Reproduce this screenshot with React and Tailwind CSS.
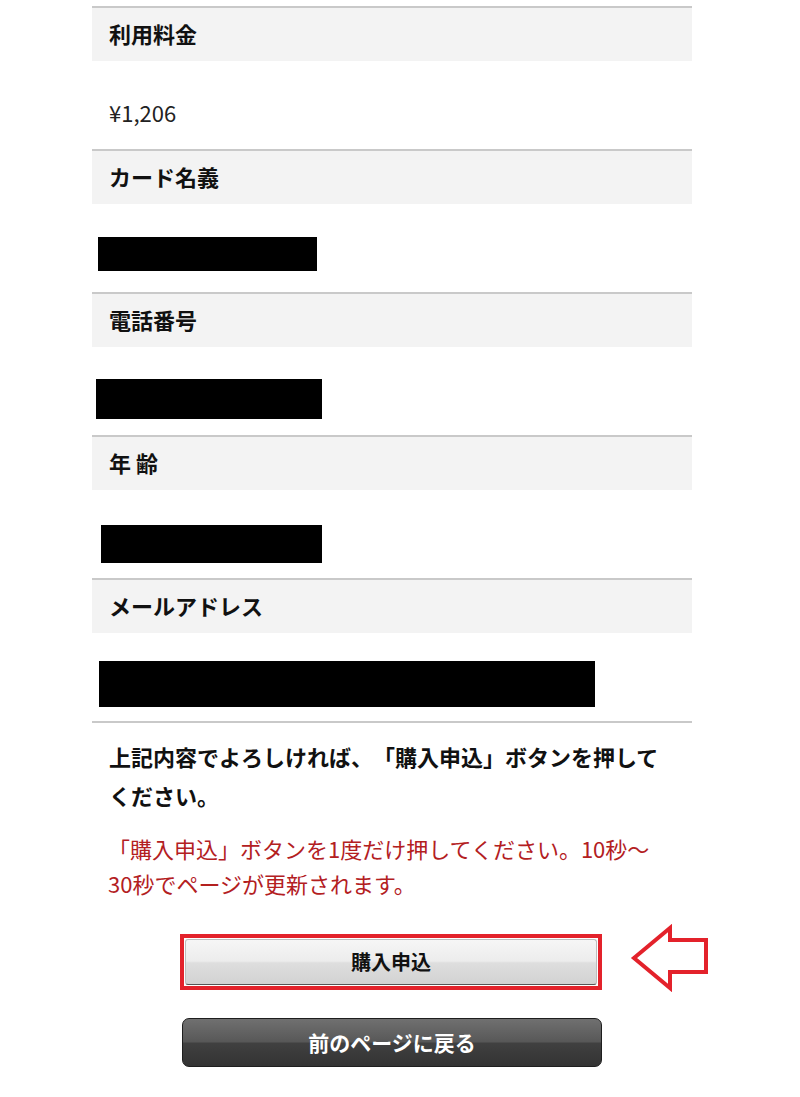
import React from "react";

const font = { fontFamily: '"Noto Sans CJK JP", "Noto Sans", sans-serif' };

// redacted values are just black bars in the screenshot
const rows = [
    { label: "利用料金", value: "¥1,206" },
    { label: "カード名義", pad: "pt-[33px] pl-[6px]", bar: "w-[219px] h-[34px]" },
    { label: "電話番号", pad: "pt-[32px] pl-[4px]", bar: "w-[226px] h-[40px]" },
    { label: "年 齢", pad: "pt-[35px] pl-[9px]", bar: "w-[221px] h-[38px]" },
    { label: "メールアドレス", pad: "pt-[28px] pl-[7px]", bar: "w-[496px] h-[46px]" },
];

function Row({ row }) {
    return (
        <div className="border-t-2 border-[#c9c9c9]">
            <div className="h-[53px] bg-[#f3f3f3] flex items-center pl-[17px] pb-[2px] text-[22px] font-bold text-[#111]">
                {row.label}
            </div>
            {row.value ? (
                <div className="h-[88px] pl-[17px] pt-[36px] text-[22px] leading-[30px] text-[#222]">{row.value}</div>
            ) : (
                <div className={`h-[88px] ${row.pad}`}>
                    <div className={`bg-black ${row.bar}`}></div>
                </div>
            )}
        </div>
    );
}

export default function App() {
    return (
        <div className="min-h-screen bg-white [text-spacing-trim:space-all]" style={font}>
            <div className="ml-[92px] w-[600px] pt-[6px]">
                {rows.map((row) => (
                    <Row key={row.label} row={row} />
                ))}

                <div className="border-t-2 border-[#c9c9c9] pt-[14px]">
                    <p className="px-[17px] text-[22px] font-bold leading-[39px] text-[#111]">
                        上記内容でよろしければ、「購入申込」ボタンを押してください。
                    </p>
                    <p className="mt-[16px] pl-[16px] pr-[24px] text-[22px] leading-[35px] text-[#b3201f]">
                        「購入申込」ボタンを1度だけ押してください。10秒〜30秒でページが更新されます。
                    </p>
                </div>

                {/* Buttons */}
                <div className="relative mt-[33px] flex flex-col items-center">
                    <div className="ml-[-2px] border-4 border-[#e3222b] p-px">
                        <button className="w-[412px] h-[46px] rounded-[3px] border border-[#bdbdbd] border-b-[#555] bg-[linear-gradient(to_bottom,#f6f6f6_0%,#ececec_48%,#dedede_52%,#d2d2d2_100%)] text-[20px] font-bold text-[#111]">
                            購入申込
                        </button>
                    </div>
                    <button className="mt-[28px] w-[420px] h-[49px] rounded-[7px] border border-[#1e1e1e] bg-[linear-gradient(to_bottom,#707070_0%,#585858_48%,#404040_52%,#333_100%)] text-[21px] font-bold text-white">
                        前のページに戻る
                    </button>

                    {/* annotation arrow */}
                    <svg className="absolute left-[538px] top-[-10px]" width="82" height="68" viewBox="0 0 82 68">
                        <polygon
                            points="4,34 40,4 40,16 76,16 76,48 40,48 40,64"
                            fill="none"
                            stroke="#e3222b"
                            strokeWidth="4"
                            strokeLinejoin="miter"
                        />
                    </svg>
                </div>
            </div>
        </div>
    );
}
